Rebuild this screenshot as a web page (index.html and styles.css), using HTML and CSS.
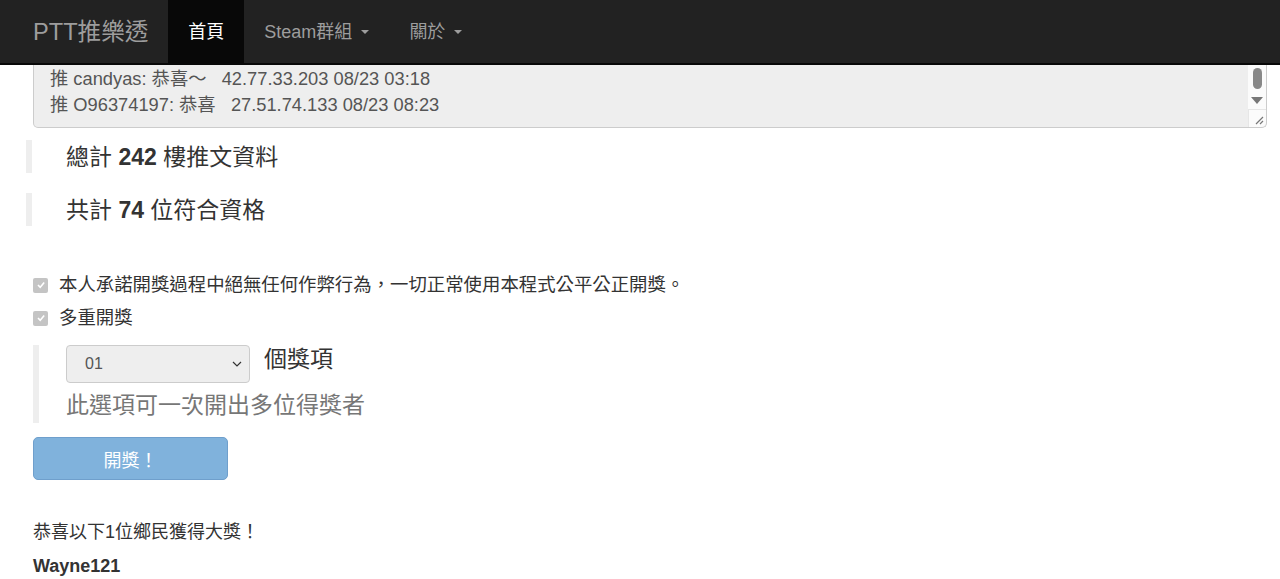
FILE: index.html
```html
<!DOCTYPE html>
<html lang="zh-tw">

<head>
  <meta charset="UTF-8">
  <meta name="viewport" content="width=device-width, initial-scale=1.0">
  <title>PTT推樂透</title>
  <link rel="stylesheet" href="styles.css">
</head>

<body>
  <nav class="navbar">
    <a class="brand" href="#">PTT推樂透</a>
    <ul class="nav">
      <li class="active"><a href="#">首頁</a></li>
      <li><a href="#">Steam群組 <span class="caret"></span></a></li>
      <li><a href="#">關於 <span class="caret"></span></a></li>
    </ul>
  </nav>

  <div class="container">
    <div class="push-box">
      <div class="push-text">
        <div>推 candyas: 恭喜～&nbsp;&nbsp; 42.77.33.203 08/23 03:18</div>
        <div>推 O96374197: 恭喜&nbsp;&nbsp; 27.51.74.133 08/23 08:23</div>
      </div>
      <div class="scrollbar">
        <div class="thumb"></div>
        <div class="arrow"></div>
        <div class="grip">
          <svg width="10" height="10" viewBox="0 0 10 10"><path d="M9 2 L2 9 M9 6 L6 9" stroke="#777" stroke-width="1.2" fill="none"/></svg>
        </div>
      </div>
    </div>

    <blockquote class="count"><span>總計 <b>242</b> 樓推文資料</span></blockquote>
    <blockquote class="count"><span>共計 <b>74</b> 位符合資格</span></blockquote>

    <div class="checks">
      <label class="check"><span class="box">
        <svg width="10" height="10" viewBox="0 0 10 10"><path d="M2 5 L4.2 7.3 L8.2 2.6" stroke="#fff" stroke-width="1.6" fill="none"/></svg>
      </span>本人承諾開獎過程中絕無任何作弊行為，一切正常使用本程式公平公正開獎。</label>
      <label class="check"><span class="box">
        <svg width="10" height="10" viewBox="0 0 10 10"><path d="M2 5 L4.2 7.3 L8.2 2.6" stroke="#fff" stroke-width="1.6" fill="none"/></svg>
      </span>多重開獎</label>
    </div>

    <blockquote class="multi">
      <div class="multi-row">
        <div class="select">01
          <svg width="10" height="6" viewBox="0 0 10 6"><path d="M1 1 L5 5 L9 1" stroke="#333" stroke-width="1.2" fill="none"/></svg>
        </div>
        <span class="unit">個獎項</span>
      </div>
      <div class="hint">此選項可一次開出多位得獎者</div>
    </blockquote>

    <button class="btn" disabled>開獎！</button>

    <p class="result">恭喜以下1位鄉民獲得大獎！</p>
    <p class="winner">Wayne121</p>
  </div>
</body>

</html>
```

FILE: styles.css
```css
* {
  margin: 0;
  padding: 0;
  box-sizing: border-box;
}

body {
  font-family: "Liberation Sans", "Noto Sans CJK TC", sans-serif;
  font-size: 18px;
  color: #333;
  background-color: #fff;
}

a {
  text-decoration: none;
}

.navbar {
  display: flex;
  align-items: stretch;
  height: 65px;
  background-color: #222;
  border-bottom: 2px solid #080808;
  padding-left: 33px;
}

.brand {
  display: flex;
  align-items: center;
  padding-bottom: 3px;
  font-size: 23.6px;
  color: #9d9d9d;
  margin-right: 20px;
}

.nav {
  display: flex;
  list-style: none;
}

.nav li a {
  display: flex;
  align-items: center;
  height: 100%;
  padding: 0 20px 3px;
  color: #9d9d9d;
  font-size: 18px;
}

.nav li.active a {
  background-color: #080808;
  color: #fff;
}

.caret {
  display: inline-block;
  width: 0;
  height: 0;
  margin-left: 9px;
  margin-top: 3px;
  border-top: 4px solid;
  border-left: 4px solid transparent;
  border-right: 4px solid transparent;
}

.container {
  padding: 0 13px 0 33px;
}

.push-box {
  display: flex;
  height: 63px;
  background-color: #eee;
  border: 1px solid #ccc;
  border-top: none;
  border-radius: 0 0 5px 5px;
}

.push-text {
  flex: 1;
  padding: 1px 0 0 16px;
  line-height: 26px;
  font-size: 18.3px;
  color: #555;
}

.scrollbar {
  width: 18px;
  display: flex;
  flex-direction: column;
  align-items: center;
  background-color: #fbfbfb;
  border-bottom-right-radius: 5px;
}

.thumb {
  width: 9px;
  height: 21px;
  margin-top: 3px;
  background-color: #888;
  border-radius: 5px;
}

.arrow {
  margin-top: 8px;
  border-top: 7px solid #777;
  border-left: 6px solid transparent;
  border-right: 6px solid transparent;
}

.grip {
  margin-top: auto;
  width: 18px;
  height: 18px;
  border-top: 1px solid #e6e6e6;
  border-left: 1px solid #e6e6e6;
  display: flex;
  align-items: flex-end;
  justify-content: flex-end;
  padding: 0 2px 2px 0;
}

blockquote {
  border-left: 6px solid #eee;
}

.count {
  margin: 12px 0 20px -7px;
  padding: 0 0 4px 34px;
  height: 33px;
  display: flex;
  align-items: center;
  font-size: 23px;
}

.checks {
  margin-top: 49px;
  display: flex;
  flex-direction: column;
  gap: 13px;
}

.check {
  display: flex;
  align-items: center;
  line-height: 20px;
  font-size: 18.4px;
}

.box {
  width: 15px;
  height: 15px;
  margin-right: 11px;
  border-radius: 2px;
  background-color: #c4c4c4;
  display: flex;
  align-items: center;
  justify-content: center;
}

.multi {
  margin-top: 17px;
  padding-left: 27px;
  height: 78px;
}

.multi-row {
  display: flex;
  align-items: flex-start;
}

.select {
  width: 184px;
  height: 38px;
  background-color: #eee;
  border: 1px solid #ccc;
  border-radius: 4px;
  display: flex;
  align-items: center;
  justify-content: space-between;
  padding: 0 7px 0 18px;
  font-size: 16px;
  color: #555;
}

.unit {
  margin-left: 14px;
  line-height: 28px;
  font-size: 23px;
}

.hint {
  margin-top: 3px;
  font-size: 23px;
  color: #777;
}

.btn {
  margin-top: 14px;
  width: 195px;
  height: 43px;
  border: 1px solid #6f9fcc;
  border-radius: 5px;
  background-color: #80b2dc;
  color: #fff;
  font-family: inherit;
  font-size: 18px;
}

.result {
  margin-top: 39px;
  line-height: 26px;
}

.winner {
  margin-top: 8px;
  font-weight: bold;
  line-height: 26px;
}
```
